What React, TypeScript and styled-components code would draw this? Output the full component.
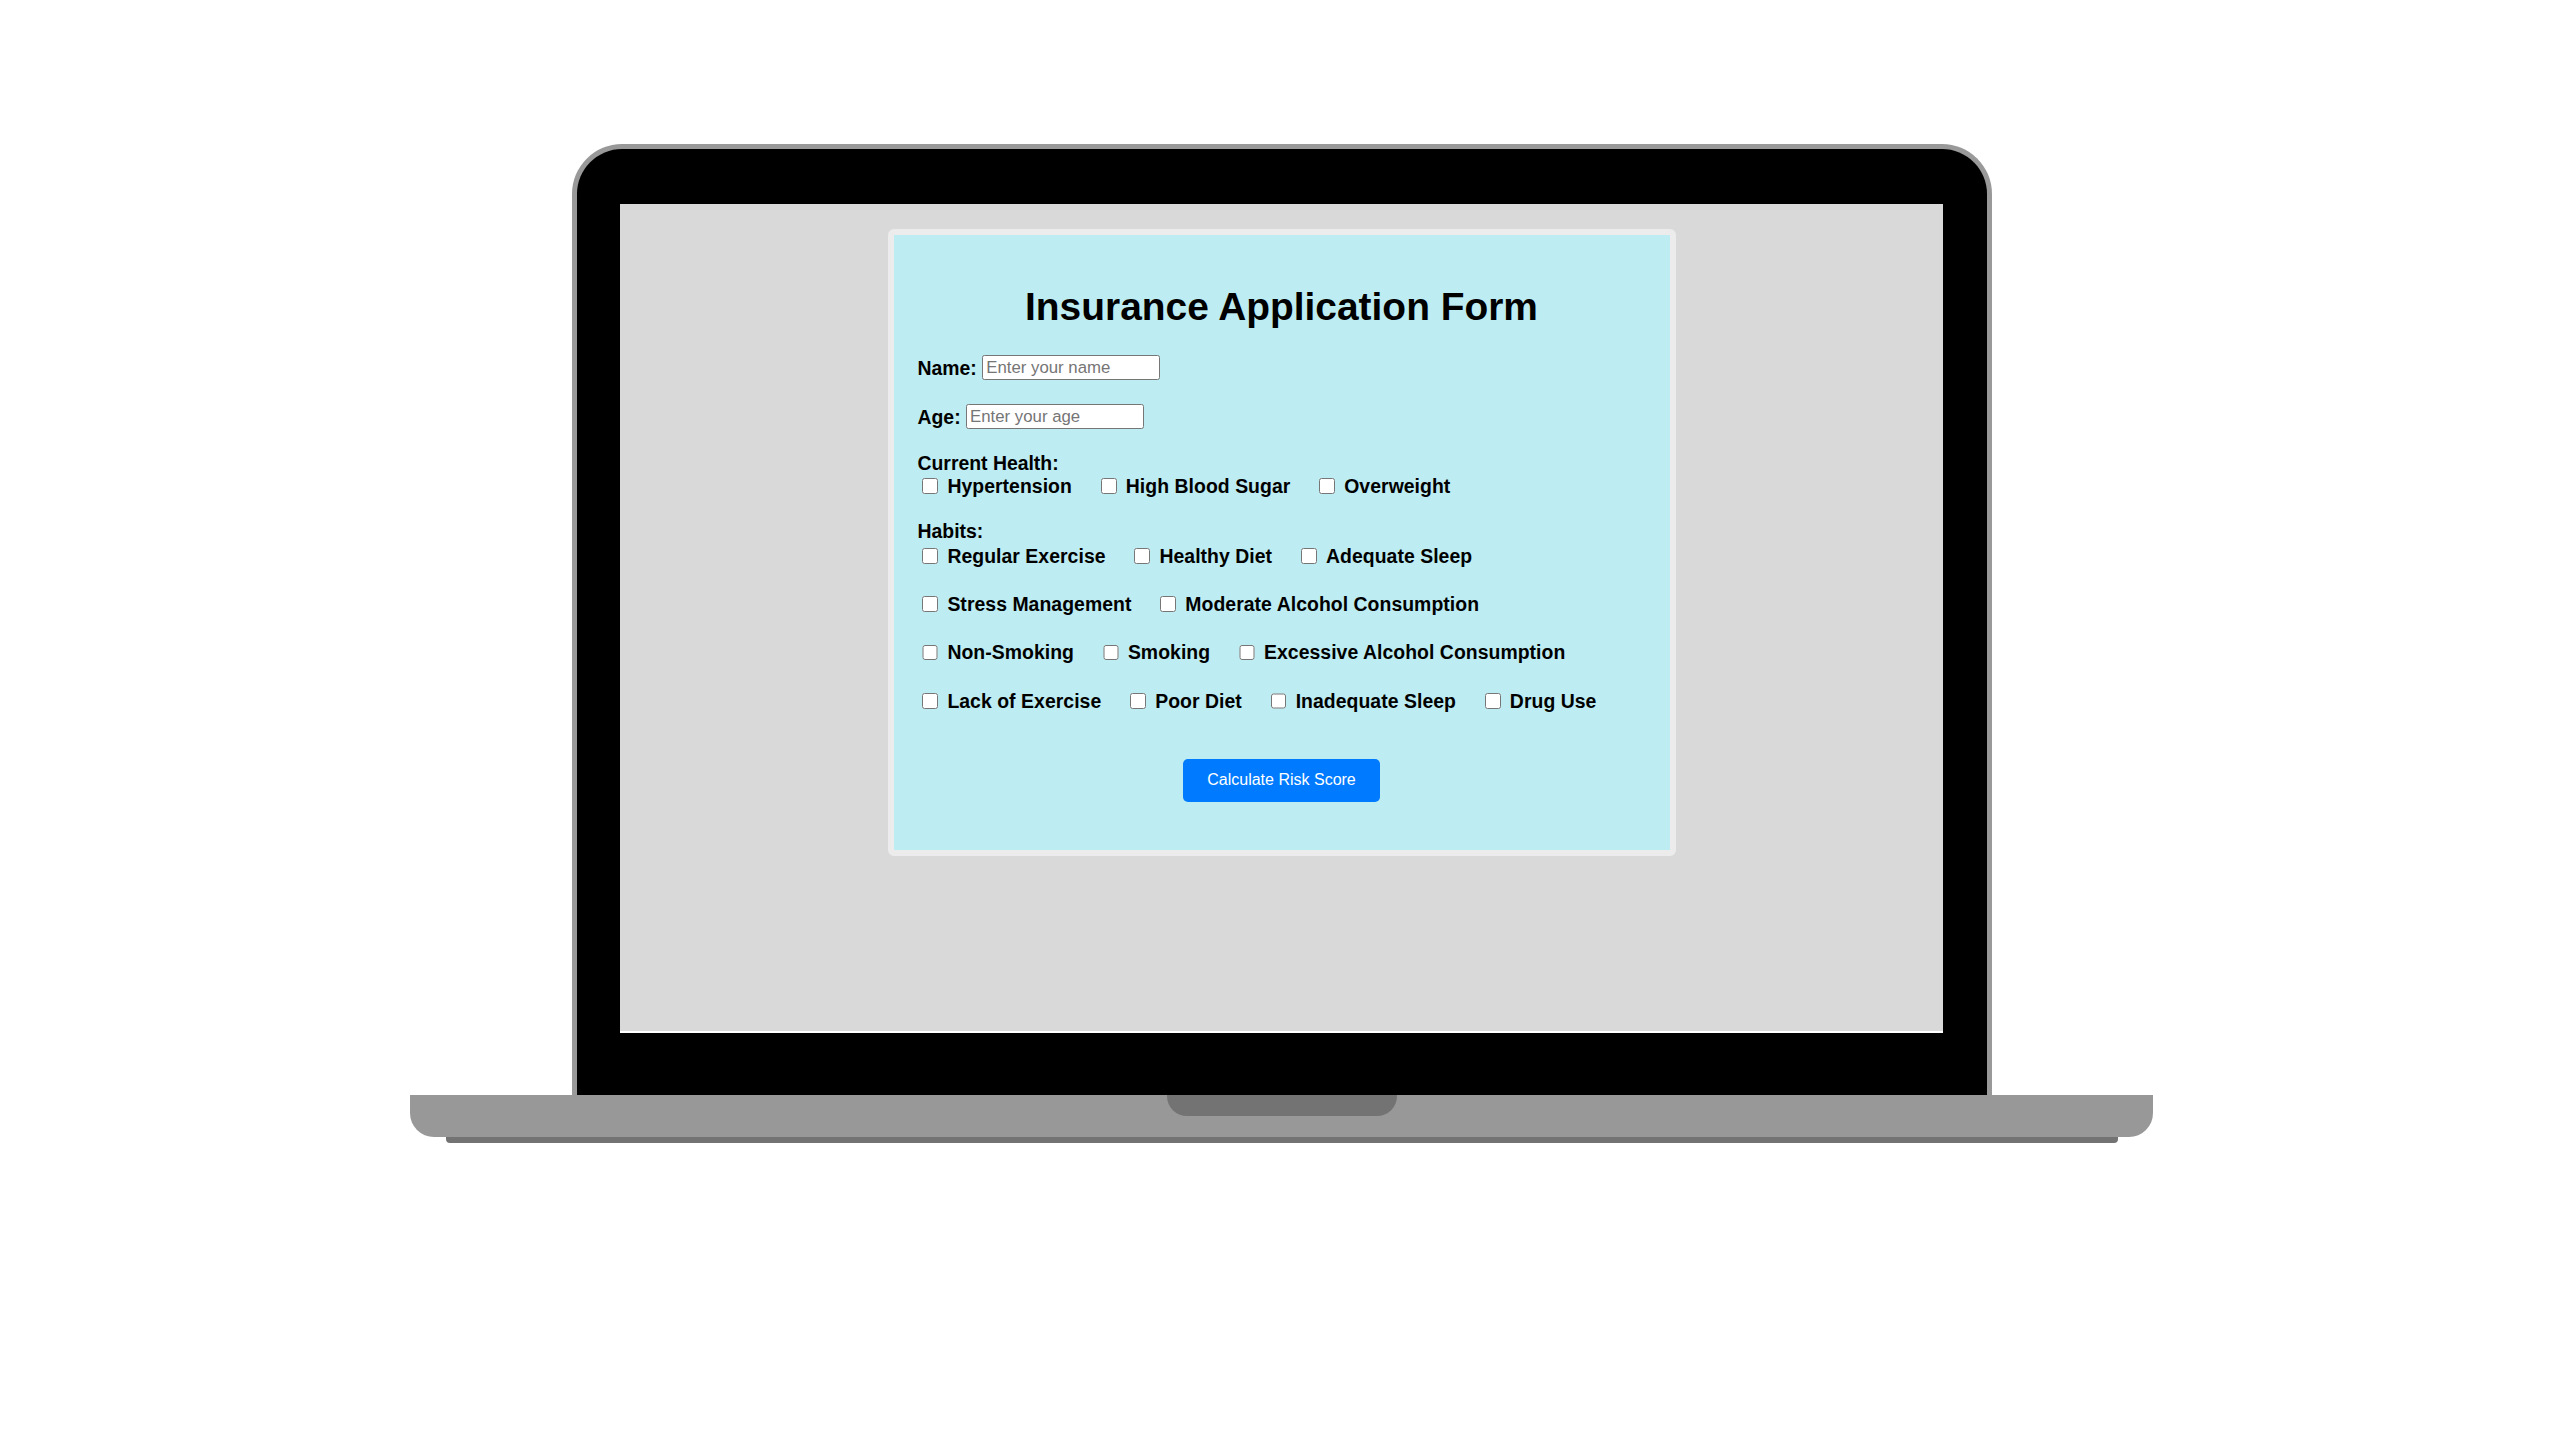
import React from "react";
import styled, { createGlobalStyle } from "styled-components";

const GlobalStyle = createGlobalStyle`
	body {
		margin: 0;
		background: #ffffff;
		font-family: "Liberation Sans", Arial, sans-serif;
	}
`;

const Page = styled.div`
	display: flex;
	justify-content: center;
	padding: 144px 0 0 3px;
`;

const Laptop = styled.div`
	display: flex;
	flex-direction: column;
	align-items: center;
	width: 1743px;
`;

const Lid = styled.div`
	box-sizing: border-box;
	width: 1420px;
	height: 951px;
	padding-top: 55px;
	background: #000000;
	border: 5px solid #999999;
	border-bottom: none;
	border-radius: 50px 50px 0 0;
`;

const Screen = styled.div`
	box-sizing: border-box;
	width: 1323px;
	height: 829px;
	margin: 0 auto;
	padding-top: 25px;
	display: flex;
	flex-direction: column;
	align-items: center;
	background: #d9d9d9;
	border-bottom: 2px solid #ffffff;
`;

const Base = styled.div`
	width: 1743px;
	height: 42px;
	display: flex;
	justify-content: center;
	align-items: flex-start;
	background: #989898;
	border-radius: 0 0 24px 24px;
`;

const Notch = styled.div`
	width: 230px;
	height: 21px;
	background: #737373;
	border-radius: 0 0 20px 20px;
`;

const Foot = styled.div`
	width: 1672px;
	height: 6px;
	background: #737373;
	border-radius: 0 0 4px 4px;
`;

const Form = styled.form`
	box-sizing: border-box;
	width: 788px;
	padding: 24px;
	background: #bdecf2;
	border: 6px solid #ececec;
	border-radius: 6px;
	color: #000000;
`;

const Title = styled.h1`
	margin: 25.7px 0;
	font-size: 38.9px;
	line-height: 44px;
	font-weight: bold;
	text-align: center;
`;

const Field = styled.div`
	display: flex;
	align-items: center;
	gap: 5.5px;
	height: 27px;
	margin-bottom: 22px;
`;

const Label = styled.label`
	font-size: 19.4px;
	line-height: 22px;
	font-weight: bold;
`;

const TextInput = styled.input`
	box-sizing: border-box;
	width: 178px;
	height: 25px;
	padding: 1px 3px;
	border: 1px solid #767676;
	border-radius: 2.4px;
	background: #ffffff;
	font-family: "Liberation Sans", Arial, sans-serif;
	font-size: 16.8px;
	color: #000000;

	&::placeholder {
		color: #757575;
	}
`;

const Group = styled.div<{ $last?: boolean }>`
	margin-bottom: ${(p) => (p.$last ? "0" : "22px")};
`;

const GroupLabel = styled.div`
	font-size: 19.4px;
	line-height: 22px;
	font-weight: bold;
`;

const CheckList = styled.div<{ $offset?: number }>`
	display: flex;
	flex-direction: column;
	gap: 24.3px;
	padding-top: ${(p) => p.$offset ?? 0}px;
`;

const CheckRow = styled.div`
	display: flex;
	align-items: center;
	height: 24px;
`;

const CheckItem = styled.label`
	display: inline-flex;
	align-items: center;
	margin-right: 24px;
	font-size: 19.4px;
	line-height: 22px;
	font-weight: bold;
	letter-spacing: 0.05px;
	white-space: nowrap;
`;

const Box = styled.input`
	width: 15.8px;
	height: 15.8px;
	margin: 0 9.3px 0 4.8px;
`;

const ButtonRow = styled.div`
	display: flex;
	justify-content: center;
	margin: 46.6px 0 24.7px;
`;

const Button = styled.button`
	padding: 12px 24px;
	border: none;
	border-radius: 5px;
	background: #007bff;
	color: #ffffff;
	font-family: "Liberation Sans", Arial, sans-serif;
	font-size: 16px;
	line-height: 18.4px;
	cursor: pointer;
`;

const health = [["Hypertension", "High Blood Sugar", "Overweight"]];

const habits = [
	["Regular Exercise", "Healthy Diet", "Adequate Sleep"],
	["Stress Management", "Moderate Alcohol Consumption"],
	["Non-Smoking", "Smoking", "Excessive Alcohol Consumption"],
	["Lack of Exercise", "Poor Diet", "Inadequate Sleep", "Drug Use"],
];

const Checks = ({ rows, offset }: { rows: string[][]; offset?: number }) => (
	<CheckList $offset={offset}>
		{rows.map((row, i) => (
			<CheckRow key={i}>
				{row.map((item) => (
					<CheckItem key={item}>
						<Box type="checkbox" name={item} />
						{item}
					</CheckItem>
				))}
			</CheckRow>
		))}
	</CheckList>
);

export default function App() {
	return (
		<>
			<GlobalStyle />
			<Page>
				<Laptop>
					<Lid>
						<Screen>
							<Form onSubmit={(e) => e.preventDefault()}>
								<Title>Insurance Application Form</Title>
								<Field>
									<Label htmlFor="name">Name:</Label>
									<TextInput id="name" type="text" placeholder="Enter your name" />
								</Field>
								<Field>
									<Label htmlFor="age">Age:</Label>
									<TextInput id="age" type="text" placeholder="Enter your age" />
								</Field>
								<Group>
									<GroupLabel>Current Health:</GroupLabel>
									<Checks rows={health} />
								</Group>
								<Group $last>
									<GroupLabel>Habits:</GroupLabel>
									<Checks rows={habits} offset={1.5} />
								</Group>
								<ButtonRow>
									<Button type="submit">Calculate Risk Score</Button>
								</ButtonRow>
							</Form>
						</Screen>
					</Lid>
					<Base>
						<Notch />
					</Base>
					<Foot />
				</Laptop>
			</Page>
		</>
	);
}
